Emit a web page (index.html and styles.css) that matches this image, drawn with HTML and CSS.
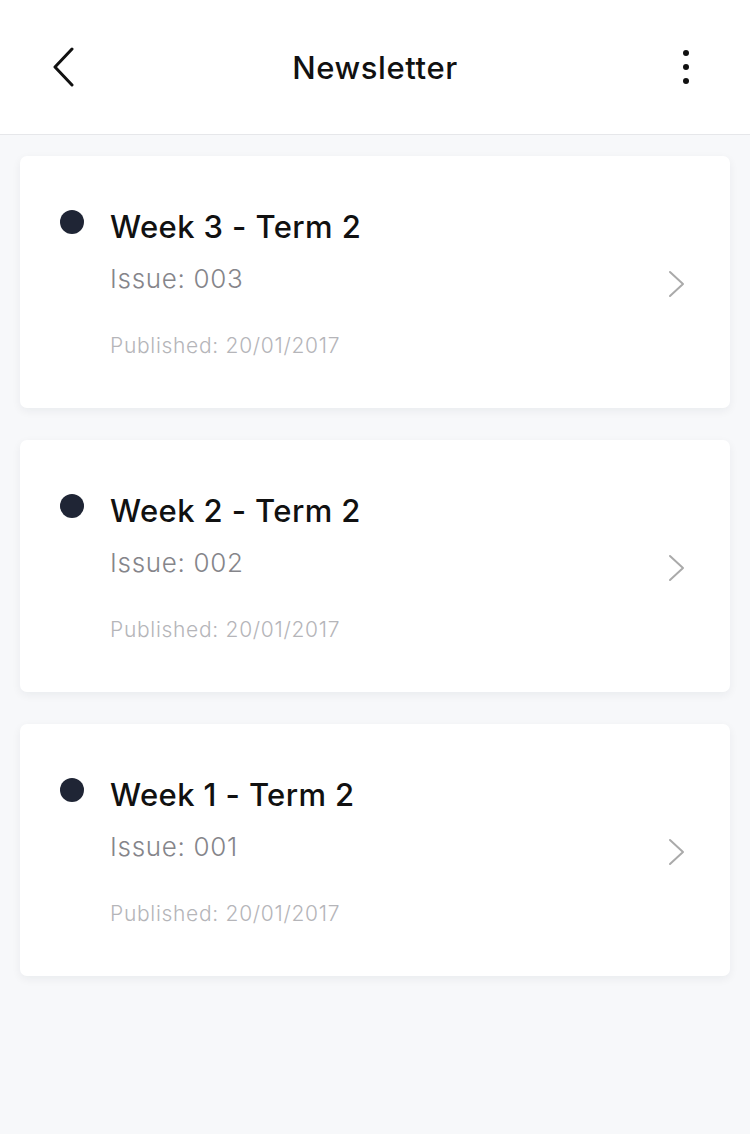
FILE: index.html
```html
<!DOCTYPE html>
<html lang="en">
<head>
  <meta charset="UTF-8">
  <meta name="viewport" content="width=device-width, initial-scale=1.0">
  <title>Newsletter</title>
  <link rel="stylesheet" href="styles.css">
</head>
<body>
  <header class="topbar">
    <button class="icon-btn" aria-label="Back">
      <svg width="24" height="40" viewBox="0 0 24 40"><path d="M20 2 L3 20 L20 38" fill="none" stroke="#111" stroke-width="3" stroke-linecap="round" stroke-linejoin="round"/></svg>
    </button>
    <h1 class="topbar-title">Newsletter</h1>
    <button class="icon-btn menu" aria-label="More">
      <span class="dot"></span><span class="dot"></span><span class="dot"></span>
    </button>
  </header>

  <main class="list">
    <a class="card" href="#">
      <span class="bullet"></span>
      <div class="card-body">
        <h2 class="card-title">Week 3 - Term 2</h2>
        <p class="issue">Issue: 003</p>
        <p class="published">Published: 20/01/2017</p>
      </div>
      <svg class="chev" width="18" height="28" viewBox="0 0 18 28"><path d="M2 2 L15 14 L2 26" fill="none" stroke="#aaa" stroke-width="2" stroke-linecap="round" stroke-linejoin="round"/></svg>
    </a>

    <a class="card" href="#">
      <span class="bullet"></span>
      <div class="card-body">
        <h2 class="card-title">Week 2 - Term 2</h2>
        <p class="issue">Issue: 002</p>
        <p class="published">Published: 20/01/2017</p>
      </div>
      <svg class="chev" width="18" height="28" viewBox="0 0 18 28"><path d="M2 2 L15 14 L2 26" fill="none" stroke="#aaa" stroke-width="2" stroke-linecap="round" stroke-linejoin="round"/></svg>
    </a>

    <a class="card" href="#">
      <span class="bullet"></span>
      <div class="card-body">
        <h2 class="card-title">Week 1 - Term 2</h2>
        <p class="issue">Issue: 001</p>
        <p class="published">Published: 20/01/2017</p>
      </div>
      <svg class="chev" width="18" height="28" viewBox="0 0 18 28"><path d="M2 2 L15 14 L2 26" fill="none" stroke="#aaa" stroke-width="2" stroke-linecap="round" stroke-linejoin="round"/></svg>
    </a>
  </main>
</body>
</html>
```

FILE: styles.css
```css
* {
  margin: 0;
  padding: 0;
  box-sizing: border-box;
}

body {
  font-family: Inter, "Noto Sans", Arial, sans-serif;
  background-color: #f7f8fa;
  color: #111;
  min-height: 1134px;
}

.topbar {
  height: 135px;
  background-color: #fff;
  border-bottom: 1px solid #e6e7ea;
  display: flex;
  align-items: center;
  justify-content: space-between;
  padding: 0 52px;
}

.icon-btn {
  background: none;
  border: none;
  width: 24px;
  height: 40px;
  display: flex;
  align-items: center;
  justify-content: center;
}

.menu {
  flex-direction: column;
  gap: 8px;
}

.dot {
  width: 6px;
  height: 6px;
  border-radius: 50%;
  background-color: #111;
}

.topbar-title {
  font-size: 31px;
  font-weight: 500;
  letter-spacing: 0.6px;
}

.list {
  padding: 21px 20px;
  display: flex;
  flex-direction: column;
  gap: 32px;
}

.card {
  height: 252px;
  background-color: #fff;
  border-radius: 7px;
  box-shadow: 0 3px 10px rgba(20, 30, 50, 0.06);
  display: flex;
  align-items: flex-start;
  padding: 0 44px 0 40px;
  text-decoration: none;
  color: inherit;
}

.bullet {
  width: 24px;
  height: 24px;
  border-radius: 50%;
  background-color: #1f2535;
  margin-top: 54px;
  flex-shrink: 0;
}

.card-body {
  flex: 1;
  padding: 52px 0 0 26px;
}

.card-title {
  font-size: 31px;
  font-weight: 500;
  line-height: 38px;
  letter-spacing: 0.4px;
}

.issue {
  font-size: 26px;
  font-weight: 300;
  color: #85858a;
  line-height: 34px;
  letter-spacing: 0.7px;
  margin-top: 16px;
}

.published {
  font-size: 21px;
  font-weight: 300;
  color: #b5b5b9;
  line-height: 26px;
  letter-spacing: 0.7px;
  margin-top: 37px;
}

.chev {
  flex-shrink: 0;
  align-self: center;
  margin-top: 4px;
}
```
